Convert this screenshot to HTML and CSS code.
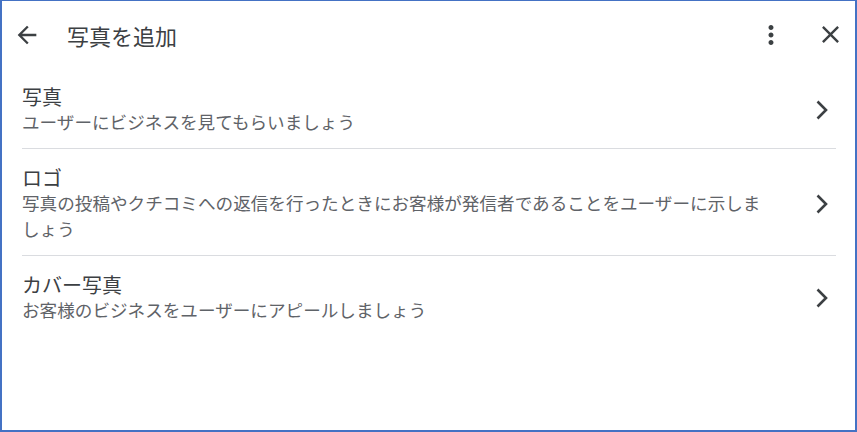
FILE: index.html
```html
<!doctype html>
<html lang="ja">
  <head>
    <meta charset="UTF-8" />
    <meta name="viewport" content="width=device-width, initial-scale=1.0" />
    <title>写真を追加</title>
    <link rel="stylesheet" href="styles.css">
  </head>
  <body>
    <div class="dialog">
      <header class="header">
        <svg class="icon back" viewBox="0 0 24 24" width="28" height="28">
          <path d="M20 11H7.83l5.59-5.59L12 4l-8 8 8 8 1.41-1.41L7.83 13H20v-2z" />
        </svg>
        <h1 class="title">写真を追加</h1>
        <svg class="icon more" viewBox="0 0 24 24" width="30" height="30">
          <path d="M12 8c1.1 0 2-.9 2-2s-.9-2-2-2-2 .9-2 2 .9 2 2 2zm0 2c-1.1 0-2 .9-2 2s.9 2 2 2 2-.9 2-2-.9-2-2-2zm0 6c-1.1 0-2 .9-2 2s.9 2 2 2 2-.9 2-2-.9-2-2-2z" />
        </svg>
        <svg class="icon close" viewBox="0 0 24 24" width="29" height="29">
          <path d="M19 6.41L17.59 5 12 10.59 6.41 5 5 6.41 10.59 12 5 17.59 6.41 19 12 13.41 17.59 19 19 17.59 13.41 12z" />
        </svg>
      </header>

      <ul class="list">
        <li class="item">
          <div class="text">
            <div class="item-title">写真</div>
            <div class="item-desc">ユーザーにビジネスを見てもらいましょう</div>
          </div>
          <svg class="chevron" viewBox="0 0 14 20" width="14" height="20">
            <polyline points="2.5,1.5 11,10 2.5,18.5" />
          </svg>
        </li>
        <li class="item">
          <div class="text">
            <div class="item-title">ロゴ</div>
            <div class="item-desc">写真の投稿やクチコミへの返信を行ったときにお客様が発信者であることをユーザーに示しましょう</div>
          </div>
          <svg class="chevron" viewBox="0 0 14 20" width="14" height="20">
            <polyline points="2.5,1.5 11,10 2.5,18.5" />
          </svg>
        </li>
        <li class="item">
          <div class="text">
            <div class="item-title">カバー写真</div>
            <div class="item-desc">お客様のビジネスをユーザーにアピールしましょう</div>
          </div>
          <svg class="chevron" viewBox="0 0 14 20" width="14" height="20">
            <polyline points="2.5,1.5 11,10 2.5,18.5" />
          </svg>
        </li>
      </ul>
    </div>
  </body>
</html>
```

FILE: styles.css
```css
* {
  box-sizing: border-box;
}

body {
  margin: 0;
  padding: 0;
  background-color: #fff;
  font-family: "Noto Sans CJK JP", "Noto Sans", sans-serif;
}

.dialog {
  width: 857px;
  height: 432px;
  border: 2px solid #4472c4;
  border-top-width: 1px;
  background-color: #fff;
}

.header {
  height: 67px;
  display: flex;
  align-items: center;
  padding: 0 10px 0 11px;
}

.icon {
  fill: #3c4043;
  flex: none;
}

.title {
  margin: 0 0 0 26px;
  flex: 1;
  font-size: 22px;
  font-weight: normal;
  line-height: 30px;
  color: #3c4043;
}

.more {
  margin-right: 30px;
}

.list {
  list-style: none;
  margin: 0 19px 0 20px;
  padding: 0;
}

.item {
  display: flex;
  align-items: center;
  padding: 17px 0 13px;
  border-bottom: 1px solid #dadce0;
}

.item:last-child {
  border-bottom: none;
}

.text {
  flex: 1;
  padding-right: 40px;
}

.item-title {
  font-size: 20px;
  line-height: 24px;
  color: #3c4043;
}

.item-desc {
  font-size: 17.6px;
  line-height: 26px;
  color: #5f6368;
}

.chevron {
  flex: none;
  margin-right: 7px;
  fill: none;
  stroke: #3c4043;
  stroke-width: 2.6;
}
```
